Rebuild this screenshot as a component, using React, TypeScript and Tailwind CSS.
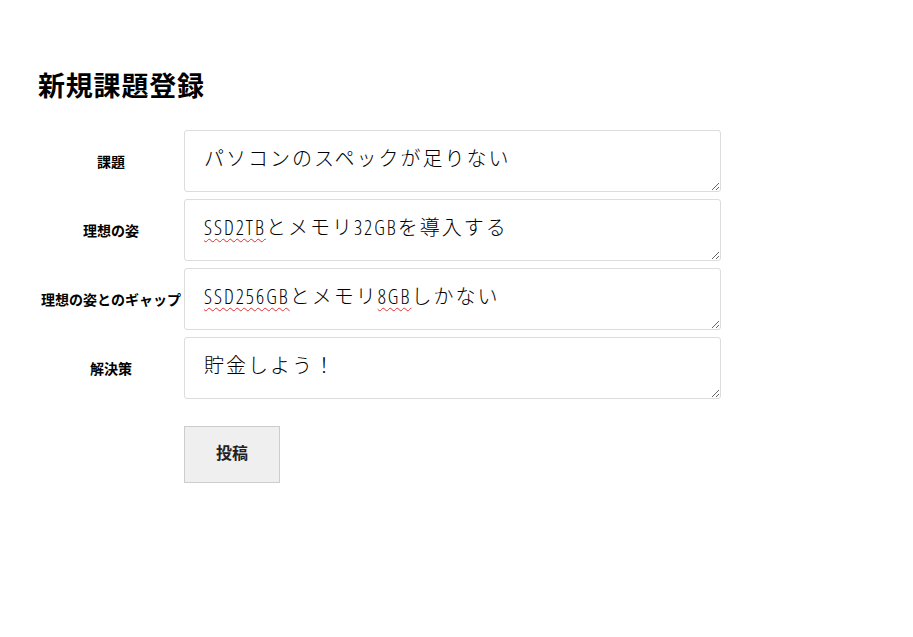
import React from "react";

type Seg = { t: string; u?: boolean };
const rows: { label: string; value: string; segs: Seg[] }[] = [
  { label: "課題", value: "パソコンのスペックが足りない", segs: [] },
  {
    label: "理想の姿",
    value: "SSD2TBとメモリ32GBを導入する",
    segs: [{ t: "SSD2TB", u: true }, { t: "とメモリ32GBを導入する" }],
  },
  {
    label: "理想の姿とのギャップ",
    value: "SSD256GBとメモリ8GBしかない",
    segs: [{ t: "SSD256GB", u: true }, { t: "とメモリ" }, { t: "8GB", u: true }, { t: "しかない" }],
  },
  { label: "解決策", value: "貯金しよう！", segs: [] },
];

const fieldFont = '"Open Sans", "Noto Sans CJK JP", sans-serif';

export default function App() {
  return (
    <div
      className="min-h-[637px] w-full bg-white pl-[38px] pt-[65px] text-black"
      style={{ fontFamily: '"Noto Sans CJK JP", "Noto Sans", sans-serif' }}
    >
      <h1 className="m-0 text-[27px] font-bold leading-[40px] tracking-[0.8px]">新規課題登録</h1>
      <form className="mt-[25px] flex flex-col gap-[7px]" onSubmit={(e) => e.preventDefault()}>
        {rows.map((r) => (
          <div key={r.label} className="flex items-center">
            <label className="w-[146px] shrink-0 text-center text-[14px] font-bold leading-[20px]">
              {r.label}
            </label>
            <div className="relative">
              <textarea
                defaultValue={r.value}
                spellCheck={false}
                className="block h-[62px] w-[537px] resize-y rounded-[3px] border border-[#dcdcdc] bg-white pl-[19px] pr-[10px] pt-[14px] text-[20px] font-light leading-[28px] tracking-[2px] text-black outline-none [font-stretch:75%]"
                style={{ fontFamily: fieldFont }}
              />
              {r.segs.length > 0 && (
                <div
                  aria-hidden="true"
                  className="pointer-events-none absolute inset-0 border border-transparent pl-[19px] pr-[10px] pt-[14px] text-[20px] font-light leading-[28px] tracking-[2px] whitespace-pre-wrap text-transparent [font-stretch:75%]"
                  style={{ fontFamily: fieldFont }}
                >
                  {r.segs.map((s, i) =>
                    s.u ? (
                      <span
                        key={i}
                        className="underline decoration-[#e03030] decoration-wavy decoration-1 underline-offset-[3px]"
                      >
                        {s.t}
                      </span>
                    ) : (
                      <span key={i}>{s.t}</span>
                    )
                  )}
                </div>
              )}
            </div>
          </div>
        ))}
        <div className="mt-[20px] flex">
          <div className="w-[146px] shrink-0" />
          <button
            type="submit"
            className="h-[57px] w-[96px] border border-[#cccccc] bg-[#efefef] pb-[5px] text-[16px] font-bold leading-[20px] text-[#222]"
          >
            投稿
          </button>
        </div>
      </form>
    </div>
  );
}
